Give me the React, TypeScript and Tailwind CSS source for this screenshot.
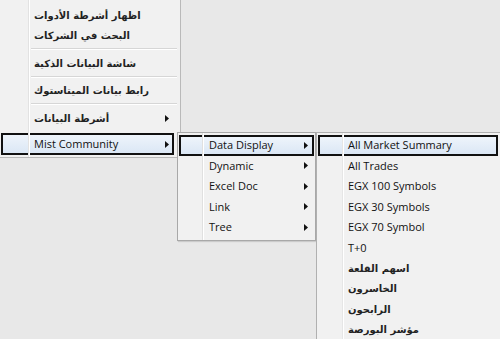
import React from "react";

type Item = { label: string; ar?: boolean; arrow?: boolean; active?: boolean; sep?: boolean };

const Arrow = () => (
    <svg width="4" height="7" viewBox="0 0 4 7" className="shrink-0">
        <path d="M0 0 L4 3.5 L0 7 Z" fill="#111" />
    </svg>
);

// one menu row; padding decides where label + arrow land
const Row = ({ item, pad, h }: { item: Item; pad: string; h: string }) => (
    <div
        className={`flex items-center border-2 ${h} ${pad} ${
            item.active ? "border-[#111] bg-gradient-to-b from-[#eef4fb] to-[#dbe7f5]" : "border-transparent"
        }`}
    >
        <span
            dir={item.ar ? "rtl" : "ltr"}
            className={
                item.ar
                    ? "whitespace-nowrap text-[10px] font-bold text-[#222] [font-family:'DejaVu_Sans',sans-serif]"
                    : "whitespace-nowrap text-[11px] text-[#111] [font-family:'Open_Sans',sans-serif]"
            }
        >
            {item.label}
        </span>
        {item.arrow && (
            <span className="ml-auto flex items-center">
                <Arrow />
            </span>
        )}
    </div>
);

const menu1: Item[] = [
    { label: "اظهار أشرطة الأدوات", ar: true },
    { label: "البحث في الشركات", ar: true },
    { label: "", sep: true },
    { label: "شاشة البيانات الذكية", ar: true },
    { label: "", sep: true },
    { label: "رابط بيانات الميتاستوك", ar: true },
    { label: "", sep: true },
    { label: "أشرطة البيانات", ar: true, arrow: true },
    { label: "Mist Community", arrow: true, active: true },
];

const menu2: Item[] = [
    { label: "Data Display", arrow: true, active: true },
    { label: "Dynamic", arrow: true },
    { label: "Excel Doc", arrow: true },
    { label: "Link", arrow: true },
    { label: "Tree", arrow: true },
];

const menu3: Item[] = [
    { label: "All Market Summary", active: true },
    { label: "All Trades" },
    { label: "EGX 100 Symbols" },
    { label: "EGX 30 Symbols" },
    { label: "EGX 70 Symbol" },
    { label: "T+0" },
    { label: "اسهم القلعة", ar: true },
    { label: "الخاسرون", ar: true },
    { label: "الرابحون", ar: true },
    { label: "مؤشر البورصة", ar: true },
];

export default function App() {
    return (
        <div className="relative h-[339px] w-[500px] overflow-hidden bg-[#e8e8e8]">
            {/* main context menu */}
            <div className="absolute left-0 top-0 flex w-[181px] flex-col border-b border-r border-[#b9b9b9] bg-[#f1f1f1] pb-[2px] pl-px pr-[6px] pt-[5.5px]">
                <div className="absolute bottom-0 left-[28px] top-0 w-px bg-[#e2e2e2]" />
                <div className="absolute bottom-0 left-[29px] top-0 w-px bg-white" />
                {menu1.map((item, i) =>
                    item.sep ? (
                        <div key={i} className="-mr-[3px] flex h-[7.5px] flex-col justify-center pl-[30px]">
                            <div className="h-px bg-[#d6d6d6]" />
                            <div className="h-px bg-white" />
                        </div>
                    ) : (
                        <Row
                            key={i}
                            item={item}
                            pad="pl-[31px] pr-[3px]"
                            h={item.active ? "mt-[5px] h-[22px]" : "h-[20px]"}
                        />
                    )
                )}
            </div>

            {/* submenu */}
            <div className="absolute left-[177px] top-[132px] flex w-[139px] flex-col border border-[#a8a8a8] bg-[#f1f1f1] px-px py-[2px] shadow-[1px_1px_1px_rgba(0,0,0,0.12)]">
                <div className="absolute bottom-0 left-[24px] top-0 w-px bg-[#e0e0e0]" />
                <div className="absolute bottom-0 left-[25px] top-0 w-px bg-white" />
                {menu2.map((item, i) => (
                    <Row key={i} item={item} pad="pl-[28px] pr-[4px]" h="h-[20.5px]" />
                ))}
            </div>

            {/* sub-submenu */}
            <div className="absolute left-[316px] top-[132px] flex w-[184px] flex-col border-l border-t border-[#b0b0b0] bg-[#f1f1f1] py-[2px] pl-px pr-[2px]">
                <div className="absolute bottom-0 left-[25px] top-0 w-px bg-[#e6e6e6]" />
                <div className="absolute bottom-0 left-[26px] top-0 w-px bg-white" />
                {menu3.map((item, i) => (
                    <Row key={i} item={item} pad="pl-[28px]" h="h-[20.5px]" />
                ))}
            </div>
        </div>
    );
}
